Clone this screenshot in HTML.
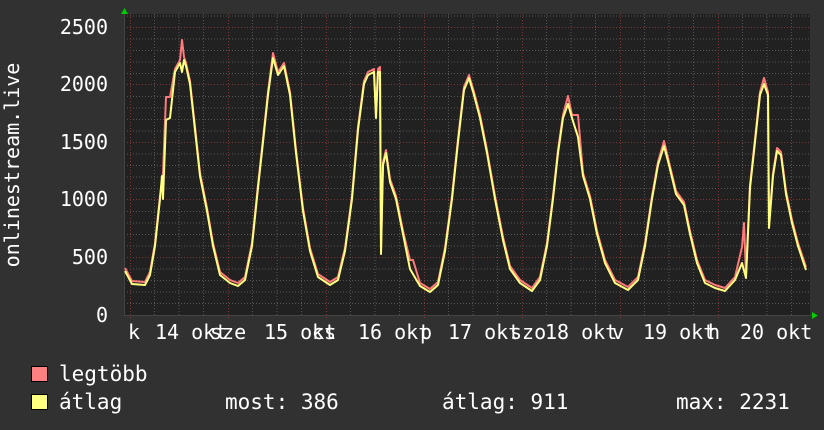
<!DOCTYPE html>
<html><head><meta charset="utf-8"><style>
html,body{margin:0;padding:0;background:#313131;}
svg{display:block}
text{font-family:"DejaVu Sans Mono","Liberation Mono",monospace;fill:#fff;font-size:20px}
.lg{font-size:21px}
</style></head><body>
<svg width="824" height="430" viewBox="0 0 824 430" xmlns="http://www.w3.org/2000/svg">
<rect width="824" height="430" fill="#313131"/>
<rect x="124" y="14" width="686" height="301" fill="#212121"/>
<g stroke="#555" stroke-width="1" stroke-dasharray="1,2">
<path d="M124 303.5H810M124 292H810M124 280.5H810M124 269H810M124 246H810M124 234.5H810M124 223H810M124 211.5H810M124 188.5H810M124 177H810M124 165.5H810M124 154H810M124 131H810M124 119.5H810M124 108H810M124 96.5H810M124 73.5H810M124 62H810M124 50.5H810M124 39H810M124 16H810"/>
<path d="M154.5 14V315M179 14V315M203.5 14V315M252.5 14V315M277 14V315M301.5 14V315M350.5 14V315M375 14V315M399.5 14V315M448.5 14V315M473 14V315M497.5 14V315M546.5 14V315M571 14V315M595.5 14V315M644.5 14V315M669 14V315M693.5 14V315M742.5 14V315M767 14V315M791.5 14V315"/>
</g>
<g stroke="#7a3535" stroke-width="1" stroke-dasharray="1,2">
<path d="M124 257.5H810M124 199.5H810M124 142.5H810M124 84.5H810M124 27.5H810"/>
<path d="M130.5 14V318M228.5 14V318M326.5 14V318M424.5 14V318M522.5 14V318M620.5 14V318M718.5 14V318"/>
</g>
<line x1="124" y1="315.5" x2="812" y2="315.5" stroke="#444"/>
<line x1="124.5" y1="12" x2="124.5" y2="315" stroke="#444"/>
<polygon points="121,14 128,14 124.5,8" fill="#00cc00"/>
<polygon points="812,312 812,319 818,315.5" fill="#00cc00"/>
<g fill="none" stroke-linejoin="round">
<polyline stroke="#ff7a7a" stroke-width="2" transform="translate(0,-3)" points="125,271 132,284 145,285 150,275 155,246 160,199 163,176 166,100 170,100 175,72 180,63 182,43 184,60 186,66 190,84 195,130 200,176 207,211 213,246 220,275 230,283 238,286 245,280 252,246 258,188 263,142 268,95 273,56 278,75 284,66 290,95 296,153 303,211 310,251 318,277 330,285 338,280 345,251 352,199 358,130 364,84 368,75 374,72 376,118 378,72 380,70 381,254 383,165 386,153 390,182 396,199 403,234 410,263 413,263 420,286 430,292 438,285 445,251 452,199 458,142 464,90 469,78 474,95 480,118 487,153 495,199 503,240 510,269 520,283 532,291 540,280 547,246 553,199 558,153 563,118 568,99 572,118 578,118 583,176 590,199 597,234 605,263 615,283 628,290 638,280 645,246 652,199 658,165 664,144 669,165 676,194 684,205 690,234 697,263 705,283 715,288 725,291 735,280 742,250 744,226 746,278 750,188 755,142 760,95 764,81 768,95 769,228 773,176 777,151 781,155 786,194 792,223 798,246 806,270"/>
<polyline stroke="#ffff80" stroke-width="2" points="125,271 132,284 145,285 150,275 155,246 160,199 162,176 163,199 166,120 170,118 175,72 180,63 182,72 184,60 186,66 190,84 195,130 200,176 207,211 213,246 220,275 230,283 238,286 245,280 252,246 258,188 263,142 268,95 273,58 278,75 284,66 290,95 296,153 303,211 310,251 318,277 330,285 338,280 345,251 352,199 358,130 364,84 368,75 374,72 376,118 378,72 380,72 381,254 383,165 386,153 390,182 396,199 403,234 410,269 420,286 430,292 438,285 445,251 452,199 458,142 464,90 469,78 474,95 480,118 487,153 495,199 503,240 510,269 520,283 532,291 540,280 547,246 553,199 558,153 563,118 568,104 572,118 578,137 583,176 590,199 597,234 605,263 615,283 628,290 638,280 645,246 652,199 658,165 664,146 669,165 676,194 684,205 690,234 697,263 705,283 715,288 725,291 735,280 742,263 746,278 750,188 755,142 760,95 764,84 768,95 769,228 773,176 777,151 781,155 786,194 792,223 798,246 806,270"/>
</g>
<g text-anchor="end">
<text x="108" y="34">2500</text>
<text x="108" y="91">2000</text>
<text x="108" y="149">1500</text>
<text x="108" y="206">1000</text>
<text x="108" y="264">500</text>
<text x="108" y="322">0</text>
</g>
<text transform="translate(19,165) rotate(-90)" text-anchor="middle">onlinestream.live</text>
<g>
<text x="128" y="339">k</text>
<text x="155" y="339">14 okt</text><text x="210" y="339">sze</text>
<text x="264" y="339">15 okt</text><text x="312" y="339">cs</text>
<text x="358" y="339">16 okt</text><text x="420" y="339">p</text>
<text x="448" y="339">17 okt</text><text x="510" y="339">szo</text>
<text x="545" y="339">18 okt</text><text x="612" y="339">v</text>
<text x="643" y="339">19 okt</text><text x="708" y="339">h</text>
<text x="740" y="339">20 okt</text>
</g>
<rect x="31.5" y="366.5" width="16" height="15" fill="#ff8080" stroke="#000"/>
<rect x="31.5" y="394.5" width="16" height="15" fill="#ffff80" stroke="#000"/>
<text class="lg" x="59" y="381">legtöbb</text>
<text class="lg" x="59" y="409">átlag</text>
<text class="lg" x="225" y="409">most: 386</text>
<text class="lg" x="442" y="409">átlag: 911</text>
<text class="lg" x="676" y="409">max: 2231</text>
</svg>
</body></html>
